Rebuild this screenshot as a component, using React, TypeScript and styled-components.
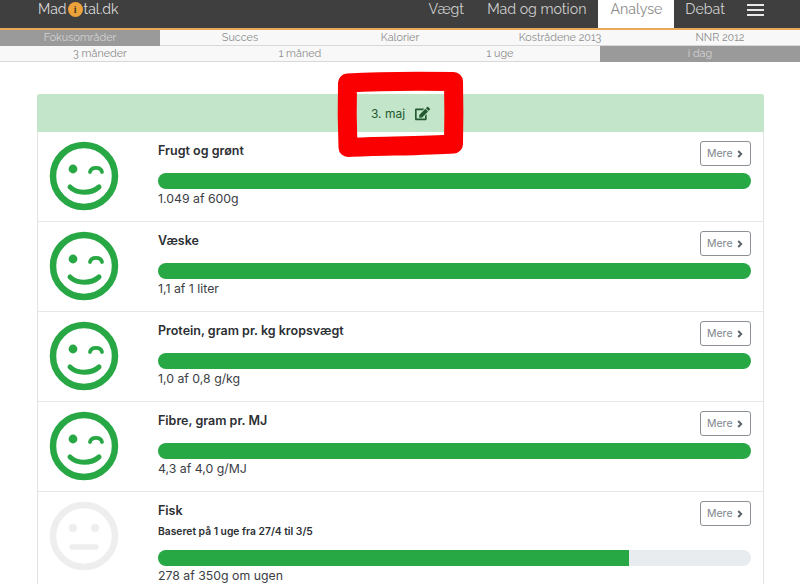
import React from 'react';
import styled, { createGlobalStyle } from 'styled-components';
import { FaEdit } from 'react-icons/fa';

const GlobalStyle = createGlobalStyle`
  html, body {
    margin: 0;
    padding: 0;
    background: #fff;
    height: 584px;
    overflow: hidden;
    font-family: Inter, "Liberation Sans", sans-serif;
  }
`;

const Page = styled.div`
  position: relative;
  width: 800px;
  height: 584px;
  overflow: hidden;
`;

const NavBar = styled.div`
  display: flex;
  align-items: stretch;
  justify-content: space-between;
  height: 28px;
  background: #3f3f3f;
  border-bottom: 2px solid #e9a95b;
  padding: 0 36px 0 38px;
  font-family: Raleway, Lato, "Open Sans", sans-serif;
`;

const Logo = styled.div`
  display: flex;
  align-items: center;
  height: 18px;
  color: #d9d9d9;
  font-size: 14px;
`;

const LogoDot = styled.span`
  display: inline-flex;
  align-items: center;
  justify-content: center;
  width: 15px;
  height: 15px;
  margin: 0 1px;
  border-radius: 50%;
  background: #eda23c;
  color: #4a3a20;
  font: bold 10px "Liberation Serif", serif;
`;

const NavLinks = styled.div`
  display: flex;
  align-items: stretch;
`;

const NavLink = styled.div<{ $active?: boolean }>`
  padding: 0 12px 0 ${p => (p.$active ? 12 : 11)}px;
  height: ${p => (p.$active ? 30 : 28)}px;
  margin-bottom: -2px;
  box-sizing: border-box;
  line-height: 18px;
  font-size: 14.2px;
  color: ${p => (p.$active ? '#8a8a8a' : '#cfcfcf')};
  background: ${p => (p.$active ? '#fff' : 'transparent')};
  border-bottom: ${p => (p.$active ? '2px solid #e9a95b' : 'none')};
`;

const Burger = styled.div`
  display: flex;
  flex-direction: column;
  gap: 3px;
  margin: 4px 0 0 10px;
  width: 17px;
  span {
    display: block;
    height: 2px;
    background: #e8e8e8;
  }
`;

const TabRow = styled.div<{ $cols: number }>`
  display: grid;
  grid-template-columns: repeat(${p => p.$cols}, 1fr);
  height: 16px;
  background: #f8f8f8;
  border-bottom: 1px solid #d8d8d8;
  box-sizing: border-box;
  font-family: Raleway, Lato, "Open Sans", sans-serif;
`;

const Tab = styled.div<{ $active?: boolean }>`
  text-align: center;
  font-size: 10.8px;
  line-height: 16px;
  color: ${p => (p.$active ? '#d4d4d4' : '#8c8c8c')};
  background: ${p => (p.$active ? '#9a9a9a' : 'transparent')};
`;

const Content = styled.div`
  padding: 32px 36px 0 37px;
`;

const Card = styled.div`
  border: 1px solid #e3e3e3;
  border-radius: 3px;
  border-bottom: none;
`;

const CardHeader = styled.div`
  display: flex;
  align-items: center;
  justify-content: center;
  gap: 10px;
  height: 37px;
  margin: -1px -1px 0;
  padding-top: 1px;
  background: #c3e5c9;
  border-radius: 3px 3px 0 0;
  color: #22592f;
  font-size: 12px;
`;

const Row = styled.div<{ $tall?: boolean }>`
  display: grid;
  grid-template-columns: 109px 1fr;
  height: ${p => (p.$tall ? 110 : 90)}px;
  box-sizing: border-box;
  border-bottom: 1px solid #e6e6e6;
  padding: 9px 12px 0 11px;
`;

const Face = styled.svg`
  display: block;
  width: 70px;
  height: 70px;
`;

const Body = styled.div`
  display: flex;
  flex-direction: column;
`;

const TitleRow = styled.div`
  display: flex;
  justify-content: space-between;
  align-items: flex-start;
  min-height: 32px;
`;

const Title = styled.div`
  color: #2b2f33;
  font-size: 12.5px;
  font-weight: 600;
  line-height: 20px;
`;

const Sub = styled.div`
  color: #2b2f33;
  font-size: 10.3px;
  font-weight: 600;
  line-height: 12px;
  margin-top: 4px;
  margin-bottom: 13px;
`;

const MoreButton = styled.div`
  display: flex;
  align-items: center;
  gap: 4px;
  box-sizing: border-box;
  width: 51px;
  height: 25px;
  padding-left: 6px;
  border: 1px solid #8a9096;
  border-radius: 3px;
  color: #7d858c;
  font-size: 10.5px;
`;

const Track = styled.div`
  height: 16px;
  border-radius: 8px;
  background: #e9ecef;
  overflow: hidden;
`;

const Fill = styled.div`
  height: 100%;
  background: #28a745;
`;

const Amount = styled.div`
  color: #3b4045;
  font-size: 12.3px;
  line-height: 18px;
  margin-top: 1px;
`;

const Marker = styled.svg`
  position: absolute;
  left: 330px;
  top: 62px;
  width: 145px;
  height: 105px;
`;

function Smiley({ happy }: { happy: boolean }) {
  const c = happy ? '#28a745' : '#eeeeee';
  return (
    <Face viewBox="0 0 70 70">
      <circle cx="35" cy="35" r="31" fill="none" stroke={c} strokeWidth="6.5" />
      {happy ? (
        <>
          <circle cx="24" cy="28" r="4.4" fill={c} />
          <path d="M41 31c1-5.5 11-5.5 12 0" fill="none" stroke={c} strokeWidth="3.8" strokeLinecap="round" />
          <path d="M21 46c7 7 21 7 29 0" fill="none" stroke={c} strokeWidth="5" strokeLinecap="round" />
        </>
      ) : (
        <>
          <circle cx="24" cy="27" r="4.2" fill={c} />
          <circle cx="46" cy="27" r="4.2" fill={c} />
          <path d="M23 46h24" fill="none" stroke={c} strokeWidth="5.5" strokeLinecap="round" />
        </>
      )}
    </Face>
  );
}

const items = [
  { title: 'Frugt og grønt', amount: '1.049 af 600g', pct: 100 },
  { title: 'Væske', amount: '1,1 af 1 liter', pct: 100 },
  { title: 'Protein, gram pr. kg kropsvægt', amount: '1,0 af 0,8 g/kg', pct: 100 },
  { title: 'Fibre, gram pr. MJ', amount: '4,3 af 4,0 g/MJ', pct: 100 },
  {
    title: 'Fisk',
    sub: 'Baseret på 1 uge fra 27/4 til 3/5',
    amount: '278 af 350g om ugen',
    pct: 79.4,
    neutral: true,
  },
];

export default function App() {
  return (
    <Page>
      <GlobalStyle />
      <NavBar>
        <Logo>
          Mad<LogoDot>i</LogoDot>tal.dk
        </Logo>
        <NavLinks>
          <NavLink>Vægt</NavLink>
          <NavLink>Mad og motion</NavLink>
          <NavLink $active>Analyse</NavLink>
          <NavLink>Debat</NavLink>
          <Burger>
            <span />
            <span />
            <span />
          </Burger>
        </NavLinks>
      </NavBar>
      <TabRow $cols={5}>
        <Tab $active>Fokusområder</Tab>
        <Tab>Succes</Tab>
        <Tab>Kalorier</Tab>
        <Tab>Kostrådene 2013</Tab>
        <Tab>NNR 2012</Tab>
      </TabRow>
      <TabRow $cols={4}>
        <Tab>3 måneder</Tab>
        <Tab>1 måned</Tab>
        <Tab>1 uge</Tab>
        <Tab $active>i dag</Tab>
      </TabRow>
      <Content>
        <Card>
          <CardHeader>
            3. maj
            <FaEdit size={15} />
          </CardHeader>
          {items.map(item => (
            <Row key={item.title} $tall={item.neutral}>
              <Smiley happy={!item.neutral} />
              <Body>
                <TitleRow>
                  <div>
                    <Title>{item.title}</Title>
                    {item.sub && <Sub>{item.sub}</Sub>}
                  </div>
                  <MoreButton>
                    Mere
                    <svg width="6" height="8" viewBox="0 0 6 8" fill="none">
                      <path d="M1.2 1 4.2 4 1.2 7" stroke="#5f666c" strokeWidth="2" />
                    </svg>
                  </MoreButton>
                </TitleRow>
                <Track>
                  <Fill style={{ width: `${item.pct}%` }} />
                </Track>
                <Amount>{item.amount}</Amount>
              </Body>
            </Row>
          ))}
        </Card>
      </Content>
      <Marker viewBox="0 0 145 105">
        <path
          d="M17.5 21 C50 19 95 19 123.5 19.5 C124 40 124 62 123.5 82 C95 84 50 84 18 85.5 C17 62 17 40 17.5 21 Z"
          fill="none"
          stroke="#fa0000"
          strokeWidth="19"
          strokeLinejoin="round"
        />
      </Marker>
    </Page>
  );
}
